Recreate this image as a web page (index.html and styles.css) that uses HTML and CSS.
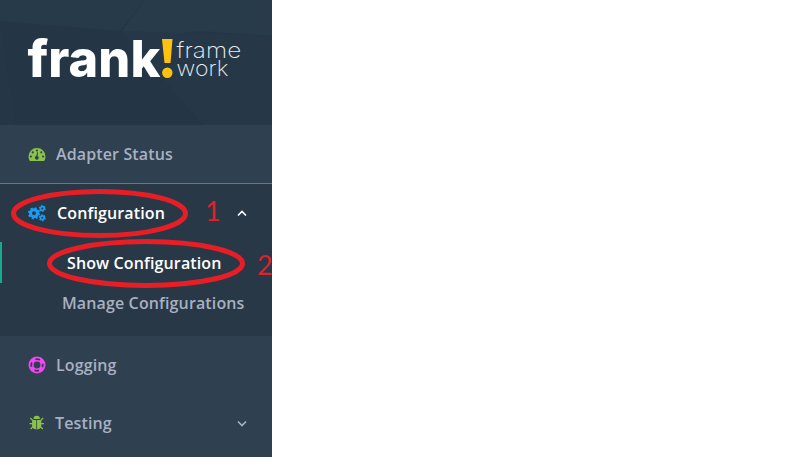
FILE: index.html
```
<!DOCTYPE html>
<html lang="en">
<head>
<meta charset="utf-8">
<title>Frank!Framework</title>
<link rel="stylesheet" href="styles.css">
</head>
<body>
<nav class="sidebar">
  <header class="brand">
    <svg class="facets" viewBox="0 0 272 125" preserveAspectRatio="none" aria-hidden="true">
      <path d="M0 0H145L120 31L0 21Z" fill="#273a4a"/>
      <path d="M145 0H272V36L200 31L140 38L122 31Z" fill="#283b4b"/>
      <path d="M122 31L272 36V125H203L160 75Z" fill="#263848"/>
      <path d="M0 21L15 125H0Z" fill="#253747"/>
    </svg>
    <svg class="logo" viewBox="0 0 272 125" aria-label="frank! framework">
      <text class="logo-frank" x="27.500" y="77" textLength="133" lengthAdjust="spacingAndGlyphs">frank</text>
      <path d="M162 39H172.500L170.500 63H164.500Z" fill="#fec20e"/>
      <circle cx="167.300" cy="72.700" r="5.200" fill="#fec20e"/>
      <text class="logo-small" x="176.500" y="58" textLength="65" lengthAdjust="spacingAndGlyphs">frame</text>
      <text class="logo-small" x="176.500" y="76" textLength="52" lengthAdjust="spacingAndGlyphs">work</text>
    </svg>
  </header>
  <ul class="menu">
    <li class="entry">
      <a class="link"><svg class="icon green" viewBox="0 0 18 18"><path fill-rule="evenodd" d="M9 3A8.500 8.500 0 0 0 .5 11.500Q.5 13.500 1.600 15.500Q1.900 16 2.400 16H15.600Q16.100 16 16.400 15.500Q17.500 13.500 17.500 11.500A8.500 8.500 0 0 0 9 3ZM9 4.400a1.100 1.100 0 1 1 0 2.200a1.100 1.100 0 1 1 0-2.200ZM4.700 6.200a1.100 1.100 0 1 1 0 2.200a1.100 1.100 0 1 1 0-2.200ZM13.300 6.200a1.100 1.100 0 1 1 0 2.200a1.100 1.100 0 1 1 0-2.200ZM2.900 10.400a1.100 1.100 0 1 1 0 2.200a1.100 1.100 0 1 1 0-2.200ZM15.100 10.400a1.100 1.100 0 1 1 0 2.200a1.100 1.100 0 1 1 0-2.200ZM10 7.200L9.600 11.200A1.800 1.800 0 1 1 8.300 11.100L9.200 7.200Z"/></svg><span class="label adapter">Adapter Status</span></a>
    </li>
    <li class="entry open">
      <a class="link"><svg class="icon blue" viewBox="0 0 18 18"><circle cx="6" cy="9.300" r="3.500" fill="none" stroke="currentColor" stroke-width="3"/><circle cx="6" cy="9.300" r="5.200" fill="none" stroke="currentColor" stroke-width="1.800" stroke-dasharray="2.040 2.040"/><g fill="none" stroke="currentColor"><circle cx="14.300" cy="4.500" r="1.900" stroke-width="1.700"/><circle cx="14.300" cy="4.500" r="2.900" stroke-width="1.200" stroke-dasharray="1.500 1.540"/><circle cx="14.300" cy="13.800" r="1.900" stroke-width="1.700"/><circle cx="14.300" cy="13.800" r="2.900" stroke-width="1.200" stroke-dasharray="1.500 1.540"/></g></svg><span class="label config">Configuration</span><svg class="chevron" viewBox="0 0 10 10"><path d="M1 7.500L5 3.500L9 7.500"/></svg></a>
      <ul class="submenu">
        <li class="sub current"><span class="show">Show Configuration</span></li>
        <li class="sub"><span class="manage">Manage Configurations</span></li>
      </ul>
    </li>
    <li class="entry">
      <a class="link"><svg class="icon pink" viewBox="0 0 18 18"><g fill="none" stroke="currentColor"><circle cx="9" cy="9" r="7.600" stroke-width="1.800"/><circle cx="9" cy="9" r="4.200" stroke-width="1.500"/><circle cx="9" cy="9" r="5.900" stroke-width="3.700" stroke-dasharray="4.630 4.637" stroke-dashoffset="-2.316"/></g></svg><span class="label logging">Logging</span></a>
    </li>
    <li class="entry">
      <a class="link"><svg class="icon green" viewBox="0 0 18 18"><path d="M5.500 5A3.200 3.200 0 0 1 11.900 5ZM4.100 6H8.300V15.500Q4.100 15 4.100 11.500ZM9.100 6H13.300V11.500Q13.300 15 9.100 15.500Z"/><path fill="none" stroke="currentColor" stroke-width="1.300" d="M2.300 4L5 6.600M15.100 4L12.400 6.600M1.500 9.600H5M15.900 9.600H12.400M2.600 15L5.300 12.400M14.800 15L12.100 12.400"/></svg><span class="label testing">Testing</span><svg class="chevron" viewBox="0 0 10 10"><path d="M1 3.500L5 7.500L9 3.500"/></svg></a>
    </li>
  </ul>
  <svg class="marks" viewBox="0 0 272 457" aria-hidden="true">
    <ellipse cx="99.500" cy="213.500" rx="86" ry="22"/>
    <ellipse cx="146" cy="263.500" rx="96.500" ry="22"/>
    <text x="205" y="220.500">1</text>
    <text x="257" y="274.500">2</text>
  </svg>
</nav>
</body>
</html>
```
FILE: styles.css
```
body {
  margin: 0;
  background: #fff;
  font-family: "Open Sans", "Noto Sans", sans-serif;
}
ul {
  list-style: none;
  margin: 0;
  padding: 0;
}
.sidebar {
  position: relative;
  width: 272px;
  height: 457px;
  overflow: hidden;
  background: #2f4050;
  color: #a7b1c2;
  font-size: 16px;
  font-weight: 600;
  letter-spacing: 0.13px;
}
.brand {
  position: relative;
  height: 125px;
  background: #243645;
}
.facets, .logo, .marks {
  position: absolute;
  inset: 0;
  width: 100%;
  height: 100%;
}
.logo-frank {
  font: 800 51px Inter, sans-serif;
  fill: #fff;
}
.logo-small {
  font: 200 22px Inter, sans-serif;
  fill: #e9edf0;
}
.link {
  display: flex;
  align-items: center;
  height: 58px;
  padding: 0 25px 0 27px;
}
.open {
  height: 152px;
  border-top: 1px solid #19a088;
  background: #293846;
  color: #fff;
}
.icon {
  width: 18px;
  height: 18px;
  flex: none;
  margin-left: 0.5px;
  margin-right: -0.5px;
  fill: currentColor;
}
.green { color: #8bc34a; }
.blue { color: #1c9cf5; }
.pink { color: #f445f4; }
.label {
  margin-left: 11px;
  white-space: nowrap;
}
.config { margin-left: 12px; }
.testing { margin-left: 10px; }
.chevron {
  width: 10px;
  height: 10px;
  margin-left: auto;
  fill: none;
  stroke: currentColor;
  stroke-width: 1.6;
}
.sub {
  display: flex;
  align-items: center;
  height: 40px;
  padding-left: 62px;
  color: #a7b1c2;
  white-space: nowrap;
}
.current {
  height: 41px;
  padding-left: 65px;
  border-left: 2px solid #19aa8d;
  color: #fff;
}
.marks ellipse {
  fill: none;
  stroke: #e81e26;
  stroke-width: 5;
}
.marks text {
  font: 400 27px Lato, sans-serif;
  letter-spacing: 0;
  fill: #dc222c;
}
```
